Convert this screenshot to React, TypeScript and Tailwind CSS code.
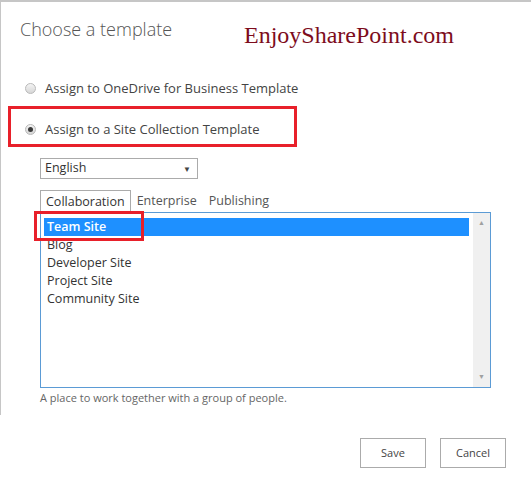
import React, { useState } from 'react';

const items = ['Team Site', 'Blog', 'Developer Site', 'Project Site', 'Community Site'];
const tabs = ['Collaboration', 'Enterprise', 'Publishing'];

const Radio: React.FC<{ checked: boolean }> = ({ checked }) => (
  <span className="flex h-[11px] w-[11px] items-center justify-center rounded-full border border-[#b9b9b9] bg-gradient-to-b from-[#f4f4f4] to-[#d6d6d6]">
    {checked && <span className="h-[5px] w-[5px] rounded-full bg-[#3a3a3a]" />}
  </span>
);

export default function App() {
  const [mode, setMode] = useState<'onedrive' | 'site'>('site');
  const [tab, setTab] = useState(0);
  const [selected, setSelected] = useState(0);

  return (
    <div className="relative h-[480px] w-[531px] overflow-hidden bg-white font-['Open_Sans','Liberation_Sans',sans-serif] text-[#444]">
      <div className="h-[2px] w-full bg-[#c6c6c6]" />
      <div className="h-[413px] border-l border-[#c6c6c6]">
        <div className="flex items-start pl-[19px] pt-[13px]">
          <h2 className="w-[224px] text-[18px] font-light leading-[28px] text-[#555]">Choose a template</h2>
          <span className="mt-[6px] font-['Liberation_Serif',serif] text-[24px] leading-[28px] text-[#7d0c1c]">
            EnjoySharePoint.com
          </span>
        </div>

        <div className="mt-[30px] flex flex-col gap-[22px] pl-[24px]">
          <label className="flex items-center gap-[9px] text-[13px] leading-[19px]" onClick={() => setMode('onedrive')}>
            <Radio checked={mode === 'onedrive'} />
            <span>Assign to OneDrive for Business Template</span>
          </label>
          <label className="flex items-center gap-[9px] text-[13px] leading-[19px]" onClick={() => setMode('site')}>
            <Radio checked={mode === 'site'} />
            <span>Assign to a Site Collection Template</span>
          </label>
        </div>

        <div className="mt-[19px] pl-[39px]">
          <div className="flex h-[21px] w-[158px] items-center justify-between border border-[#ababab] pl-[4px] pr-[6px] text-[12.5px] text-[#333]">
            <span>English</span>
            <span className="text-[8px] text-[#444]">▼</span>
          </div>

          <div className="mt-[11px] flex items-end text-[12.5px] leading-[20px]">
            {tabs.map((t, i) => (
              <button
                key={t}
                onClick={() => setTab(i)}
                className={
                  i === tab
                    ? 'h-[22px] border border-b-0 border-[#ababab] px-[5px] text-[#333]'
                    : 'h-[22px] px-[6px] text-[#555]'
                }
              >
                {t}
              </button>
            ))}
          </div>

          <div className="flex h-[176px] w-[451px] border border-[#5b9bd5] bg-white">
            <div className="flex-1 pl-[3px] pt-[5px]">
              {items.map((it, i) => (
                <div
                  key={it}
                  onClick={() => setSelected(i)}
                  className={
                    i === selected
                      ? 'h-[18px] bg-[#1e90ff] pl-[3px] text-[12.5px] font-semibold leading-[18px] text-white'
                      : 'h-[18px] pl-[3px] text-[12.5px] leading-[18px] text-[#333]'
                  }
                >
                  {it}
                </div>
              ))}
            </div>
            <div className="ml-[4px] flex w-[17px] flex-col items-center justify-between bg-[#f0f0f0] py-[5px] text-[7px] text-[#a0a0a0]">
              <span>▲</span>
              <span>▼</span>
            </div>
          </div>

          <p className="mt-[2px] text-[11px] leading-[16px] text-[#666]">A place to work together with a group of people.</p>
        </div>
      </div>

      <div className="mt-[23px] flex justify-end gap-[14px] pr-[25px]">
        <button className="h-[30px] w-[66px] border border-[#ababab] text-[11px] text-[#444]">Save</button>
        <button className="h-[30px] w-[66px] border border-[#ababab] text-[11px] text-[#444]">Cancel</button>
      </div>

      {/* highlight boxes */}
      <div className="absolute left-[8px] top-[106px] h-[41px] w-[289px] border-[3px] border-[#e8202a]" />
      <div className="absolute left-[34px] top-[211px] h-[30px] w-[110px] border-[3px] border-[#e8202a]" />
    </div>
  );
}
